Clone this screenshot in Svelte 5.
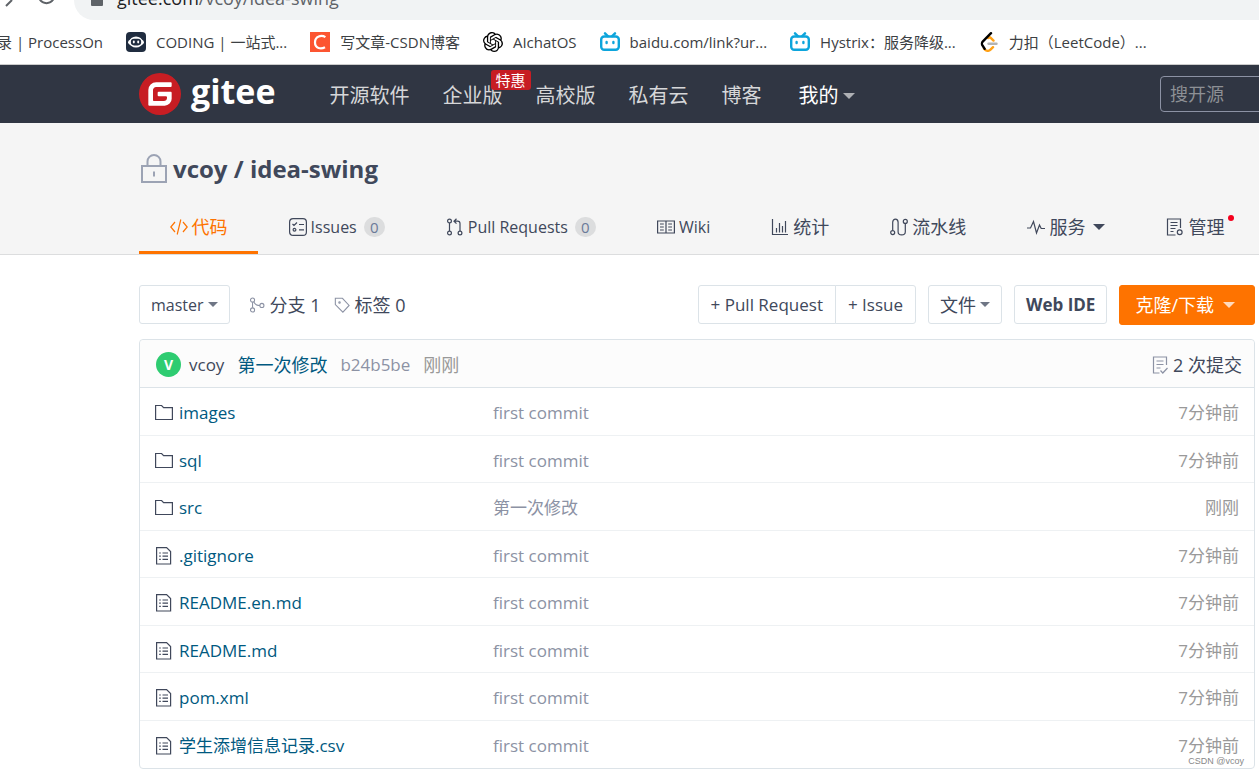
<script lang="ts">
  type Bookmark = { label: string; icon: string };
  type Tab = { label: string; icon: string; latin?: boolean; count?: number; menu?: boolean; dot?: boolean };
  type Entry = { name: string; dir?: boolean; message: string; time: string };

  const bookmarks: Bookmark[] = [
    { label: "CODING | 一站式...", icon: "coding" },
    { label: "写文章-CSDN博客", icon: "csdn" },
    { label: "AIchatOS", icon: "openai" },
    { label: "baidu.com/link?ur...", icon: "bili" },
    { label: "Hystrix：服务降级...", icon: "bili" },
    { label: "力扣（LeetCode）...", icon: "leetcode" },
  ];

  const tabs: Tab[] = [
    { label: "代码", icon: "code" },
    { label: "Issues", icon: "issues", latin: true, count: 0 },
    { label: "Pull Requests", icon: "pulls", latin: true, count: 0 },
    { label: "Wiki", icon: "wiki", latin: true },
    { label: "统计", icon: "chart" },
    { label: "流水线", icon: "pipeline" },
    { label: "服务", icon: "pulse", menu: true },
    { label: "管理", icon: "manage", dot: true },
  ];

  const entries: Entry[] = [
    { name: "images", dir: true, message: "first commit", time: "7分钟前" },
    { name: "sql", dir: true, message: "first commit", time: "7分钟前" },
    { name: "src", dir: true, message: "第一次修改", time: "刚刚" },
    { name: ".gitignore", message: "first commit", time: "7分钟前" },
    { name: "README.en.md", message: "first commit", time: "7分钟前" },
    { name: "README.md", message: "first commit", time: "7分钟前" },
    { name: "pom.xml", message: "first commit", time: "7分钟前" },
    { name: "学生添增信息记录.csv", message: "first commit", time: "7分钟前" },
  ];

  let active = $state("代码");
</script>

{#snippet favicon(name: string)}
  <svg class="favicon" viewBox="0 0 20 20" aria-hidden="true">
    {#if name === "coding"}
      <rect width="20" height="20" rx="4" fill="#202d40" />
      <ellipse cx="10" cy="10.3" rx="8" ry="4" fill="#fff" />
      <ellipse cx="10" cy="10" rx="6.5" ry="5.6" fill="#fff" />
      <rect x="4.8" y="6.8" width="10.4" height="6.6" rx="3.3" fill="#202d40" />
      <ellipse cx="7.8" cy="10" rx="1" ry="1.4" fill="#fff" />
      <ellipse cx="12.2" cy="10" rx="1" ry="1.4" fill="#fff" />
    {:else if name === "csdn"}
      <rect width="20" height="20" fill="#fc5531" />
      <path d="M15.4 5.2C11.5 2.6 5 4.2 5 10.5c0 6 6 7 10 4.7" fill="none" stroke="#fff" stroke-width="2.2" />
    {:else if name === "openai"}
      <path
        transform="scale(.8333)"
        d="M22.2819 9.8211a5.9847 5.9847 0 0 0-.5157-4.9108 6.0462 6.0462 0 0 0-6.5098-2.9A6.0651 6.0651 0 0 0 4.9807 4.1818a5.9847 5.9847 0 0 0-3.9977 2.9 6.0462 6.0462 0 0 0 .7427 7.0966 5.98 5.98 0 0 0 .511 4.9107 6.051 6.051 0 0 0 6.5146 2.9001A5.9847 5.9847 0 0 0 13.2599 24a6.0557 6.0557 0 0 0 5.7718-4.2058 5.9894 5.9894 0 0 0 3.9977-2.9001 6.0557 6.0557 0 0 0-.7475-7.0729zm-9.022 12.6081a4.4755 4.4755 0 0 1-2.8764-1.0408l.1419-.0804 4.7783-2.7582a.7948.7948 0 0 0 .3927-.6813v-6.7369l2.02 1.1686a.071.071 0 0 1 .038.052v5.5826a4.504 4.504 0 0 1-4.4945 4.4944zm-9.6607-4.1254a4.4708 4.4708 0 0 1-.5346-3.0137l.142.0852 4.783 2.7582a.7712.7712 0 0 0 .7806 0l5.8428-3.3685v2.3324a.0804.0804 0 0 1-.0332.0615L9.74 19.9502a4.4992 4.4992 0 0 1-6.1408-1.6464zM2.3408 7.8956a4.485 4.485 0 0 1 2.3655-1.9728V11.6a.7664.7664 0 0 0 .3879.6765l5.8144 3.3543-2.0201 1.1685a.0757.0757 0 0 1-.071 0l-4.8303-2.7865A4.504 4.504 0 0 1 2.3408 7.872zm16.5963 3.8558L13.1038 8.364 15.1192 7.2a.0757.0757 0 0 1 .071 0l4.8303 2.7913a4.4944 4.4944 0 0 1-.6765 8.1042v-5.6772a.79.79 0 0 0-.407-.667zm2.0107-3.0231l-.142-.0852-4.7735-2.7818a.7759.7759 0 0 0-.7854 0L9.409 9.2297V6.8974a.0662.0662 0 0 1 .0284-.0615l4.8303-2.7866a4.4992 4.4992 0 0 1 6.6802 4.66zM8.3065 12.863l-2.02-1.1638a.0804.0804 0 0 1-.038-.0567V6.0742a4.4992 4.4992 0 0 1 7.3757-3.4537l-.142.0805L8.704 5.459a.7948.7948 0 0 0-.3927.6813zm1.0976-2.3654l2.602-1.4998 2.6069 1.4998v2.9994l-2.5974 1.4997-2.6067-1.4997Z"
      />
    {:else if name === "bili"}
      <g fill="none" stroke="#0da5dc" stroke-width="2.4" stroke-linecap="round">
        <rect x="1.2" y="4.5" width="17.6" height="13.2" rx="3" />
        <path d="M5 1.3l2.8 2.8M15 1.3l-2.8 2.8M6.6 10v1M13.4 10v1" />
      </g>
    {:else}
      <g fill="none" stroke-width="2.4" stroke-linecap="round">
        <path d="M9.5 11.8h8" stroke="#b3b3b3" />
        <path d="M9 6c1-.9 2-.8 3 .2l2.5 2.4M5 16.5l1 1.2c1.5 1.5 4 1.5 5.5 0l2.5-2.5" stroke="#ffa116" />
        <path d="M12 1.200L3.700 9.600c-1 1-1 3 0 4.200L5.700 16.800" stroke="#000" />
      </g>
    {/if}
  </svg>
{/snippet}

{#snippet icon(name: string)}
  <svg class="icon {name}" viewBox="0 0 18 18" aria-hidden="true">
    {#if name === "code"}
      <path d="M5 4L.8 9L5 14M13 4l4.2 5L13 14M10.8 1.5L7.2 16.5" />
    {:else if name === "issues"}
      <rect x=".6" y=".6" width="16.8" height="16.8" rx="3.5" />
      <path d="M3.5 6l1.5 1.5 3-3M10 6.5h5M10 11.8h5" />
      <circle cx="5.5" cy="11.8" r="1.4" />
    {:else if name === "pulls"}
      <circle cx="3.5" cy="3" r="1.9" />
      <circle cx="3.5" cy="15" r="1.9" />
      <circle cx="14" cy="15" r="1.9" />
      <path d="M3.5 5v8M14 13V5.5c0-1.5-1-2.3-2.3-2.3H8M10.5.8L8 3.2l2.5 2.4" />
    {:else if name === "wiki"}
      <path d="M.6 3h16.8v12H.6zM9 3v12M3 6h3.8M3 9h3.8M3 12h3.8M11.2 6H15M11.2 9H15M11.2 12H15" />
    {:else if name === "chart"}
      <path d="M1.5 1v15.5H17M5.5 10v4.5M8.5 5v9.5M11.5 8v6.5M14.5 3v11.5" />
    {:else if name === "pipeline"}
      <circle cx="2.7" cy="14.6" r="2" />
      <circle cx="15.3" cy="3.4" r="2" />
      <path d="M2.7 12.6V4.3c0-4.3 5.4-4.3 5.4 0v9.400c0 4.300 7.200 4.300 7.200 0V5.400" />
    {:else if name === "pulse"}
      <path d="M0 10h3.5l3-6.5 3 11.5 3-8 1.7 3.5H18" />
    {:else if name === "manage"}
      <path d="M9.5 17h-8V1h13v9M4.5 4.5h7M4.5 7.5h7M4.5 10.5h5M4.5 13.5h3" />
      <circle cx="13.7" cy="14.3" r="2.4" />
    {:else if name === "branch"}
      <circle cx="4" cy="3.5" r="2.3" />
      <circle cx="4" cy="14.5" r="2.3" />
      <circle cx="14.5" cy="9.5" r="2.3" />
      <path d="M4 5.8v6.4M5.5 5.5c1.5 3 3.5 4 6.7 4" />
    {:else if name === "tag"}
      <path d="M1.5 1.5h8l7.500 8L10 17 1.500 8.500z" />
      <circle cx="6.2" cy="6.2" r=".8" />
    {:else if name === "commits"}
      <path d="M15.5 9V1h-13v16h6M5.5 5h7M5.5 8.5h7M5.5 12h4M9.5 14.5l2.3 2.5 4.700-5" />
    {:else if name === "folder"}
      <path d="M.6 1.5h6l2 2.2h8.8v11.800H.6z" />
    {:else if name === "file"}
      <path d="M1.6.6h10l4 4V17h-14zM7.5 6H13M7.5 9.2H13M7.5 12.400H13M4.200 6h1.600M4.200 9.200h1.600M4.200 12.400h1.600" />
    {/if}
  </svg>
{/snippet}

<div class="browser">
  <div class="addressbar">
    <svg class="controls" viewBox="0 0 74 20" aria-hidden="true">
      <path d="M6 6L12 0M39.5-1a8 8 0 0 0 14 0" />
    </svg>
    <div class="address">
      <svg viewBox="0 0 12 16" aria-hidden="true"><rect y="5" width="12" height="11" rx="1" /></svg>
      <span><b>gitee.com</b>/vcoy/idea-swing</span>
    </div>
  </div>
  <nav class="bookmarks" aria-label="Bookmarks">
    <a class="first" href="#processon">登录 | ProcessOn</a>
    {#each bookmarks as b}
      <a href="#bookmark">{@render favicon(b.icon)}{b.label}</a>
    {/each}
  </nav>
</div>

<header class="site">
  <a class="logo" href="#home">
    <svg viewBox="0 0 24 24" aria-hidden="true">
      <circle cx="12" cy="12" r="11.5" fill="#fff" />
      <path
        fill="#c71d23"
        d="M11.984 0A12 12 0 0 0 0 12a12 12 0 0 0 12 12 12 12 0 0 0 12-12A12 12 0 0 0 12 0a12 12 0 0 0-.016 0zm6.09 5.333c.328 0 .593.266.592.593v1.482a.594.594 0 0 1-.593.592H9.777c-.982 0-1.778.796-1.778 1.778v5.63c0 .327.266.592.593.592h5.63c.982 0 1.778-.796 1.778-1.778v-.296a.593.593 0 0 0-.592-.593h-4.15a.592.592 0 0 1-.592-.592v-1.482a.593.593 0 0 1 .593-.592h6.815c.327 0 .593.265.593.592v3.408a4 4 0 0 1-4 4H5.926a.593.593 0 0 1-.593-.593V9.778a4.444 4.444 0 0 1 4.445-4.444h8.296Z"
      />
    </svg>
    <span>gitee</span>
  </a>
  <nav class="menu" aria-label="Main">
    <a href="#explore">开源软件</a>
    <a href="#enterprises">企业版<span class="promo">特惠</span></a>
    <a href="#education">高校版</a>
    <a href="#private">私有云</a>
    <a href="#blog">博客</a>
    <a class="mine" href="#dashboard">我的<i class="caret"></i></a>
  </nav>
  <input type="search" placeholder="搜开源" aria-label="搜开源" />
</header>

<section class="repo">
  <h1>
    <svg viewBox="0 0 26 30" aria-label="私有">
      <path d="M1 12h24v16H1zM6.5 12V7.5a6.5 6.5 0 0 1 13 0V12M13 17.5v5" />
    </svg>
    <span><a href="#vcoy">vcoy</a> / <a href="#repo">idea-swing</a></span>
  </h1>
  <nav class="tabs" aria-label="Repository">
    {#each tabs as tab}
      <a
        href="#{tab.icon}"
        class:active={active === tab.label}
        class:latin={tab.latin}
        onclick={() => (active = tab.label)}
      >
        {@render icon(tab.icon)}
        <span class="label">{tab.label}{#if tab.dot}<i class="dot"></i>{/if}</span>
        {#if tab.count !== undefined}<span class="count">{tab.count}</span>{/if}
        {#if tab.menu}<i class="caret"></i>{/if}
      </a>
    {/each}
  </nav>
</section>

<main>
  <div class="toolbar">
    <button class="btn ref">master<i class="caret"></i></button>
    <div class="refs">
      <a href="#branches">{@render icon("branch")}分支 1</a>
      <a href="#tags">{@render icon("tag")}标签 0</a>
    </div>
    <div class="actions">
      <div class="group">
        <button class="btn">+ Pull Request</button>
        <button class="btn">+ Issue</button>
      </div>
      <button class="btn files">文件<i class="caret"></i></button>
      <button class="btn strong">Web IDE</button>
      <button class="btn clone">克隆/下载<i class="caret"></i></button>
    </div>
  </div>

  <div class="tree">
    <div class="latest">
      <span class="avatar">V</span>
      <a class="author" href="#vcoy">vcoy</a>
      <a class="subject" href="#commit">第一次修改</a>
      <a class="muted" href="#commit">b24b5be</a>
      <span class="muted ago">刚刚</span>
      <a class="commits" href="#commits">{@render icon("commits")}2 次提交</a>
    </div>
    <table>
      <tbody>
        {#each entries as entry}
          <tr>
            <td class="name">
              <a href="#tree">{@render icon(entry.dir ? "folder" : "file")}{entry.name}</a>
            </td>
            <td class="message">{entry.message}</td>
            <td class="time">{entry.time}</td>
          </tr>
        {/each}
      </tbody>
    </table>
    <span class="watermark">CSDN @vcoy</span>
  </div>
</main>

<style>
  :global(body) {
    background: #fff;
    color: #40485b;
    font-family: "Open Sans", "Noto Sans CJK SC", sans-serif;
    font-size: 17px;
    line-height: 24px;
    overflow-x: hidden;
  }
  a {
    color: inherit;
    text-decoration: none;
  }
  svg {
    flex: none;
  }
  .icon {
    width: 18px;
    height: 18px;
    fill: none;
    stroke: currentColor;
    stroke-width: 1.2;
  }
  .caret {
    flex: none;
    border: 5px solid transparent;
    border-top-color: currentColor;
    border-bottom: 0;
  }

  /* Browser chrome, cut through the address bar. */
  .addressbar {
    display: flex;
    align-items: flex-end;
    height: 20px;
    overflow: hidden;
  }
  .controls {
    width: 74px;
    height: 20px;
    fill: none;
    stroke: #5f6368;
    stroke-width: 2;
  }
  .address {
    flex: 1;
    display: flex;
    align-items: center;
    gap: 14px;
    height: 40px;
    margin-right: -40px;
    padding: 0 0 4px 17px;
    box-sizing: border-box;
    border-radius: 20px;
    background: #f1f3f4;
    color: #5f6368;
    font-size: 18px;
  }
  .address svg {
    width: 12px;
    height: 16px;
    fill: #5f6368;
  }
  .address b {
    color: #202124;
    font-weight: 400;
  }
  .bookmarks {
    display: flex;
    gap: 23px;
    height: 44px;
    border-bottom: 1px solid #ccc;
    color: #3c4043;
    font-size: 15px;
    white-space: nowrap;
    overflow: hidden;
  }
  .bookmarks a {
    display: flex;
    flex: none;
    align-items: center;
    gap: 10px;
  }
  .bookmarks .first {
    justify-content: flex-end;
    width: 103px;
  }
  .favicon {
    width: 20px;
    height: 20px;
  }

  .site {
    display: flex;
    align-items: center;
    height: 58px;
    padding-left: 139px;
    background: #303643;
    overflow: hidden;
  }
  .logo {
    display: flex;
    align-items: center;
    gap: 10px;
    color: #fff;
    font-size: 34px;
    font-weight: 700;
    line-height: 40px;
  }
  .logo span {
    padding-bottom: 6px;
  }
  .logo svg {
    width: 42px;
    height: 42px;
  }
  .menu {
    display: flex;
    gap: 33px;
    margin: 0 auto 0 54px;
    padding-top: 4px;
    color: #d6d7d9;
    font-size: 20px;
  }
  .menu a {
    position: relative;
    white-space: nowrap;
  }
  .menu .mine {
    display: flex;
    align-items: center;
    gap: 4px;
    margin-left: 4px;
    color: #fff;
  }
  .mine .caret {
    border-width: 6px 6px 0;
    color: #aeb0b4;
  }
  .promo {
    position: absolute;
    top: -14px;
    right: -28px;
    padding: 0 5px;
    border-radius: 3px;
    background: #c71d23;
    color: #fff;
    font-size: 15px;
    line-height: 20px;
  }
  .site input {
    flex: none;
    width: 140px;
    height: 36px;
    margin-right: -41px;
    padding: 0 9px;
    box-sizing: border-box;
    border: 1px solid #8c92a4;
    border-radius: 4px;
    background: transparent;
    color: #fff;
    font: inherit;
    font-size: 18px;
  }
  .site input::placeholder {
    color: #8d9095;
    opacity: 1;
  }

  .repo {
    padding: 30px 4px 0 139px;
    border-bottom: 1px solid #dcddde;
    background: #f5f5f5;
  }
  h1 {
    display: flex;
    align-items: center;
    gap: 6px;
    margin: 0;
    font-size: 24px;
    line-height: 32px;
  }
  h1 svg {
    width: 26px;
    height: 30px;
    margin-left: 2px;
    fill: none;
    stroke: #9ca3b4;
    stroke-width: 2;
  }
  .tabs {
    display: flex;
    margin-top: 15px;
  }
  .tabs a {
    display: flex;
    flex: 1 0 auto;
    align-items: center;
    justify-content: center;
    gap: 4px;
    height: 54px;
    padding-top: 2px;
    box-sizing: border-box;
    border-bottom: 3px solid transparent;
    font-size: 18px;
    white-space: nowrap;
  }
  .tabs .latin {
    font-size: 16px;
  }
  .tabs .active {
    border-bottom-color: #fe7300;
    color: #fe7300;
  }
  .label {
    position: relative;
  }
  .count {
    min-width: 21px;
    margin-left: 3px;
    border-radius: 10px;
    background: #dcddde;
    color: #6b7a99;
    font-size: 15px;
    line-height: 20px;
    text-align: center;
  }
  .tabs .caret {
    margin-left: 4px;
    border-width: 6px 6px 0;
  }
  .dot {
    position: absolute;
    top: 0;
    right: -10px;
    width: 6px;
    height: 6px;
    border-radius: 50%;
    background: #f5001d;
  }

  main {
    padding: 30px 4px 0 139px;
  }
  .toolbar,
  .actions {
    display: flex;
    align-items: flex-start;
  }
  .group,
  .refs,
  .refs a {
    display: flex;
    align-items: center;
  }
  .btn {
    display: flex;
    align-items: center;
    gap: 4px;
    height: 39px;
    padding: 0 11px;
    border: 1px solid #dce3e8;
    border-radius: 3px;
    background: #fff;
    color: #40485b;
    font: inherit;
    white-space: nowrap;
    cursor: pointer;
  }
  .btn .caret {
    color: #6f7685;
  }
  .ref {
    font-size: 16px;
  }
  .files,
  .clone {
    font-size: 18px;
  }
  .group .btn {
    padding: 0 12px;
  }
  .group .btn:first-child {
    border-radius: 3px 0 0 3px;
  }
  .group .btn:last-child {
    margin-left: -1px;
    border-radius: 0 3px 3px 0;
  }
  .strong {
    font-weight: 700;
  }
  .clone {
    gap: 9px;
    height: 40px;
    padding: 0 19px 0 15px;
    border-color: #fe7300;
    background: #fe7300;
    color: #fff;
  }
  .clone .caret {
    border-width: 6px 6px 0;
    color: #ffdabd;
  }
  .refs {
    gap: 13px;
    height: 39px;
    margin-left: 19px;
    font-size: 18px;
  }
  .refs a {
    gap: 5px;
  }
  .refs .icon {
    width: 16px;
    height: 16px;
    color: #8c92a4;
  }
  .actions {
    gap: 12px;
    margin-left: auto;
  }

  .tree {
    position: relative;
    margin-top: 14px;
    border: 1px solid #dce3e8;
    border-radius: 4px;
  }
  .latest {
    display: flex;
    align-items: center;
    height: 48px;
    padding: 2px 12px 0 16px;
    box-sizing: border-box;
    border-bottom: 1px solid #dce3e8;
    border-radius: 4px 4px 0 0;
    background: #fcfcfc;
  }
  .avatar {
    width: 25px;
    margin-right: 8px;
    border-radius: 50%;
    background: #2ecc71;
    color: #fff;
    font-size: 14px;
    font-weight: 700;
    line-height: 25px;
    text-align: center;
  }
  .author,
  .subject,
  .latest .muted {
    margin-right: 13px;
  }
  .subject,
  .ago,
  .commits {
    font-size: 18px;
  }
  .subject,
  .name {
    color: #005980;
  }
  .muted,
  .message {
    color: #8c92a4;
  }
  .commits {
    display: flex;
    align-items: center;
    gap: 4px;
    margin-left: auto;
  }
  .commits .icon {
    color: #8c92a4;
  }
  table {
    width: 100%;
    border-spacing: 0;
  }
  tr {
    height: 47px;
  }
  tr:nth-child(odd) {
    height: 48px;
  }
  td {
    padding: 3px 0 0;
    border-bottom: 1px solid #eef1f3;
  }
  tr:last-child td {
    border-bottom: 0;
  }
  .name {
    width: 353px;
  }
  .name a {
    display: flex;
    align-items: center;
    gap: 6px;
    padding-left: 15px;
  }
  .name .icon {
    color: #40485b;
  }
  .ago,
  .time {
    color: #999;
  }
  .time {
    padding-right: 15px;
    text-align: right;
  }
  .watermark {
    position: absolute;
    right: 10px;
    bottom: 1px;
    color: #888;
    font-family: "Liberation Sans", sans-serif;
    font-size: 9px;
    line-height: 12px;
  }
</style>
